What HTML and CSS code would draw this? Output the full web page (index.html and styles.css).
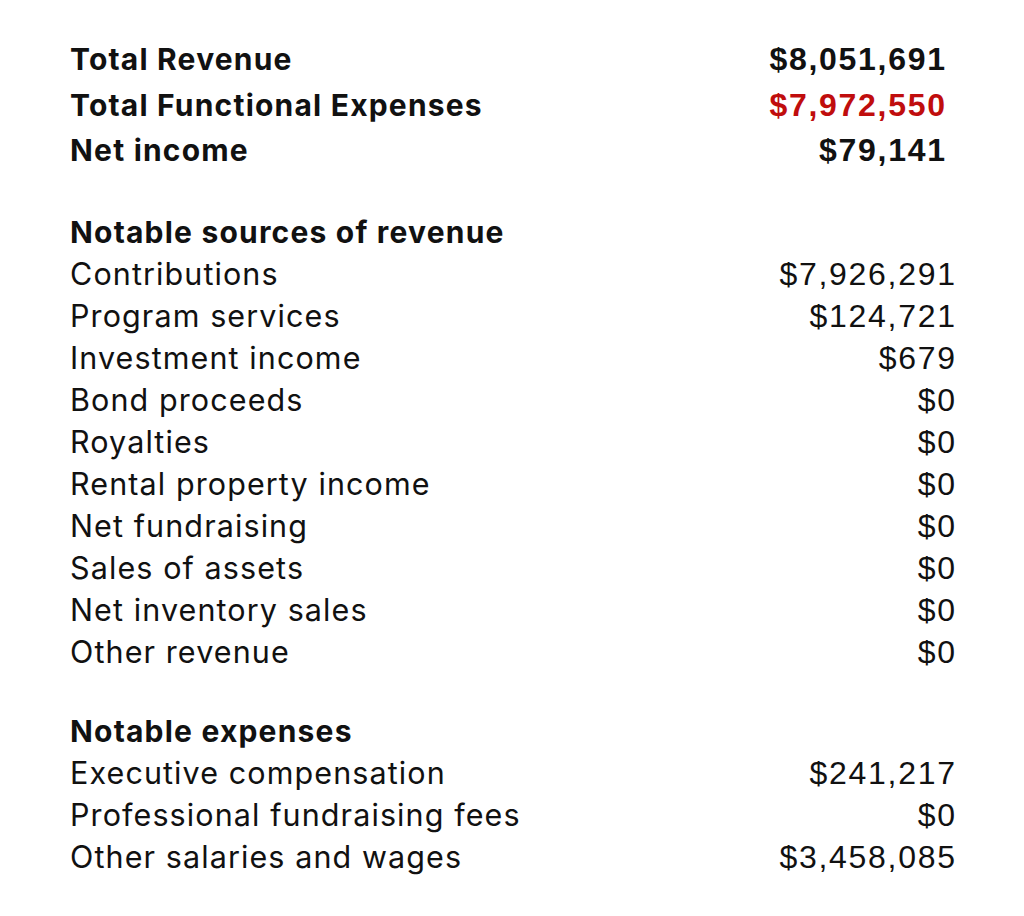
FILE: index.html
```html
<!DOCTYPE html>
<html>
<head>
<meta charset="utf-8">
<link rel="stylesheet" href="styles.css">
</head>
<body>
<div class="page">
  <div class="summary">
    <div class="row"><span class="label">Total Revenue</span><span class="val">$8,051,691</span></div>
    <div class="row"><span class="label">Total Functional Expenses</span><span class="val red">$7,972,550</span></div>
    <div class="row"><span class="label">Net income</span><span class="val">$79,141</span></div>
  </div>
  <div class="section">
    <div class="heading">Notable sources of revenue</div>
    <div class="row"><span class="label">Contributions</span><span class="val">$7,926,291</span></div>
    <div class="row"><span class="label">Program services</span><span class="val">$124,721</span></div>
    <div class="row"><span class="label">Investment income</span><span class="val">$679</span></div>
    <div class="row"><span class="label">Bond proceeds</span><span class="val">$0</span></div>
    <div class="row"><span class="label">Royalties</span><span class="val">$0</span></div>
    <div class="row"><span class="label">Rental property income</span><span class="val">$0</span></div>
    <div class="row"><span class="label">Net fundraising</span><span class="val">$0</span></div>
    <div class="row"><span class="label">Sales of assets</span><span class="val">$0</span></div>
    <div class="row"><span class="label">Net inventory sales</span><span class="val">$0</span></div>
    <div class="row"><span class="label">Other revenue</span><span class="val">$0</span></div>
  </div>
  <div class="section">
    <div class="heading">Notable expenses</div>
    <div class="row"><span class="label">Executive compensation</span><span class="val">$241,217</span></div>
    <div class="row"><span class="label">Professional fundraising fees</span><span class="val">$0</span></div>
    <div class="row"><span class="label">Other salaries and wages</span><span class="val">$3,458,085</span></div>
  </div>
</div>
</body>
</html>
```
FILE: styles.css
```css
html, body {
  margin: 0;
  padding: 0;
  background: #fff;
  color: #111;
}
.page {
  padding: 37px 69px 0 70px;
  font-family: Inter, "Liberation Sans", sans-serif;
  display: flex;
  flex-direction: column;
  gap: 37px;
}
.row {
  display: flex;
  justify-content: space-between;
  align-items: baseline;
}
.summary {
  padding-right: 10px;
}
.summary .row {
  height: 45.5px;
  line-height: 45.5px;
}
.summary .label {
  font-size: 30px;
  font-weight: 700;
  letter-spacing: 1.2px;
}
.val {
  font-family: "Liberation Sans", Arial, sans-serif;
  font-size: 32px;
  letter-spacing: 1.7px;
  margin-right: -1.7px;
}
.summary .val {
  font-weight: 700;
}
.red {
  color: #c00d0d;
}
.section .heading {
  font-size: 30px;
  font-weight: 700;
  letter-spacing: 1.2px;
  line-height: 42px;
  height: 42px;
}
.section .row {
  height: 42px;
  line-height: 42px;
}
.section .label {
  font-size: 30.5px;
  font-weight: 400;
  letter-spacing: 1.1px;
}
.section .val {
  font-weight: 400;
}
```
